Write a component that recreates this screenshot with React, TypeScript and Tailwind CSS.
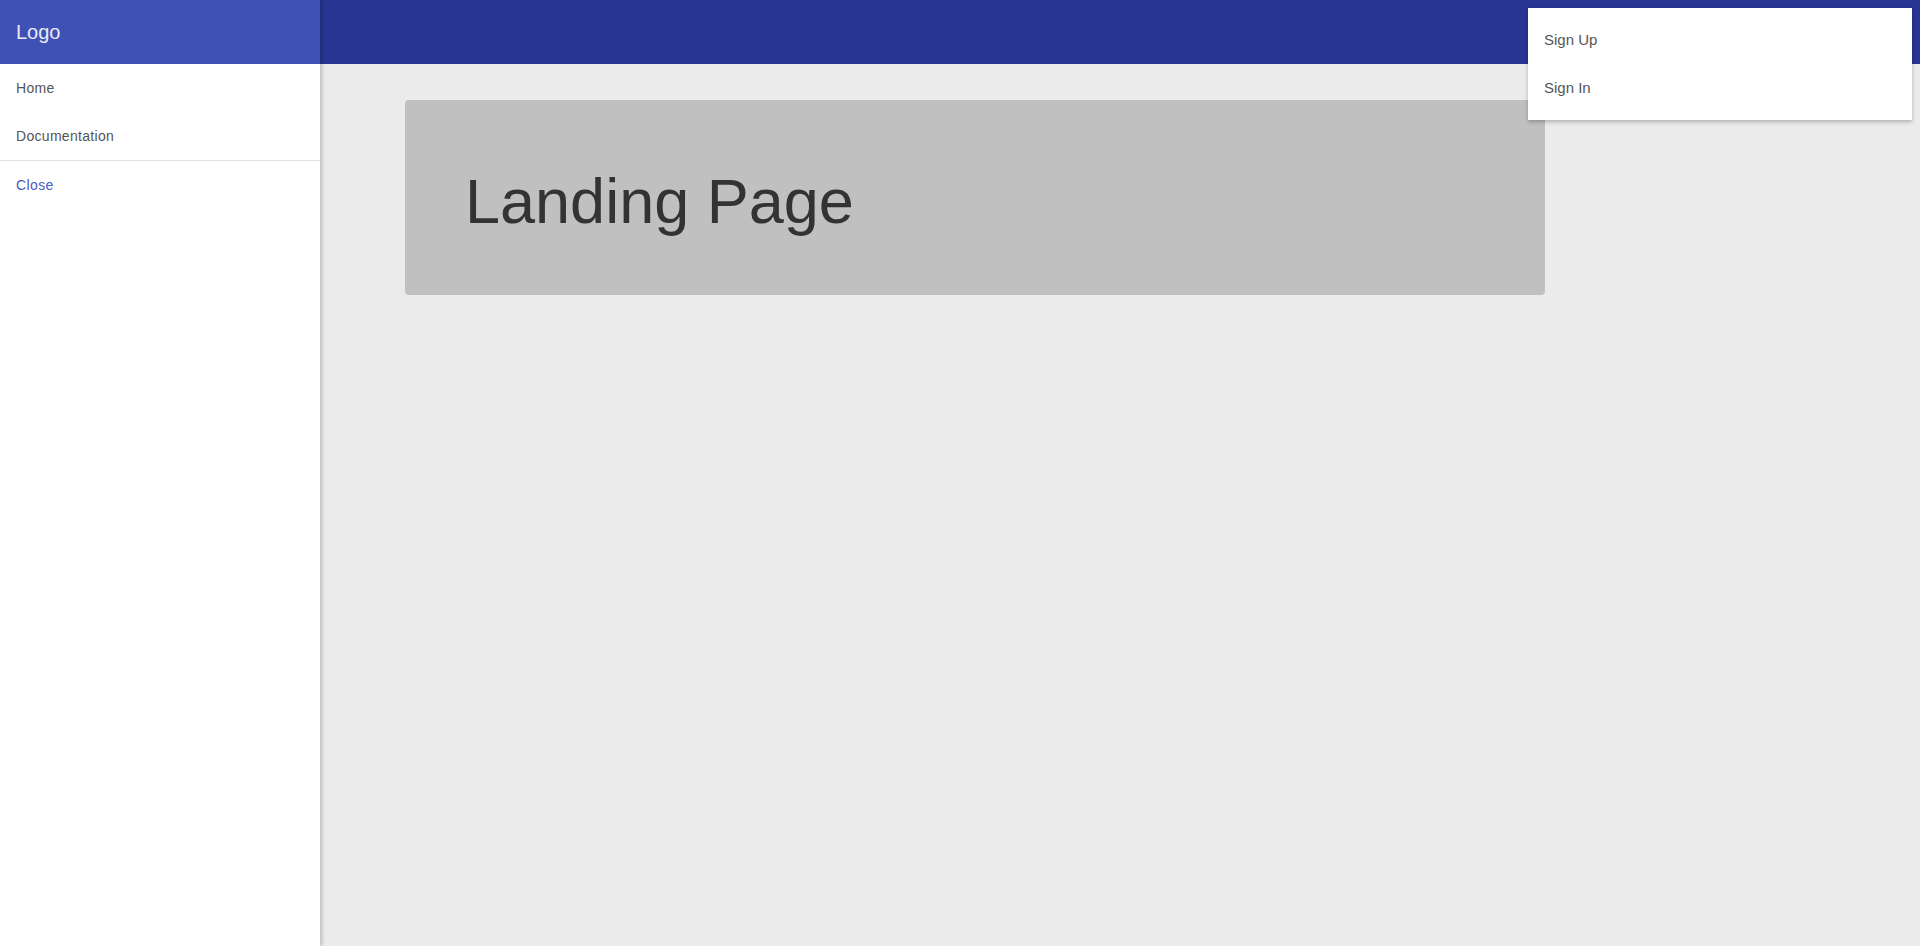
import React from "react"

const navItems = ["Home", "Documentation"]
const menuItems = ["Sign Up", "Sign In"]

const App = () => {
  return (
    <div className="relative flex h-[946px] w-[1920px] overflow-hidden bg-[#ebebeb] font-['Liberation_Sans',Arial,sans-serif]">
      <aside className="z-20 flex h-full w-[320px] shrink-0 flex-col bg-white shadow-[2px_0_4px_rgba(0,0,0,0.2)]">
        <div className="flex h-16 items-center bg-[#3f51b5] px-4">
          <span className="text-[20px] text-[#e8eaf6]">Logo</span>
        </div>
        <nav className="flex flex-col">
          {navItems.map((item) => (
            <a key={item} className="flex h-12 items-center px-4 text-[14px] tracking-[0.3px] text-[#555]">
              {item}
            </a>
          ))}
        </nav>
        <div className="h-px bg-[#e0e0e0]" />
        <a className="flex h-12 items-center px-4 text-[14px] tracking-[0.4px] text-[#4a5cc0]">Close</a>
      </aside>

      <div className="flex flex-1 flex-col">
        <header className="h-16 shrink-0 bg-[#283593]" />
        <main className="pl-[85px] pt-9">
          <div className="flex h-[195px] w-[1140px] items-center rounded bg-[#c0c0c0] pl-[60px] pt-2">
            <h1 className="text-[63px] leading-none text-[#333]">Landing Page</h1>
          </div>
        </main>
      </div>

      <div className="absolute right-2 top-2 z-30 w-[384px] bg-white py-2 shadow-[0_2px_4px_rgba(0,0,0,0.25)]">
        {menuItems.map((item) => (
          <div key={item} className="flex h-12 items-center px-4 text-[15px] text-[#555]">
            {item}
          </div>
        ))}
      </div>
    </div>
  )
}

export default App
